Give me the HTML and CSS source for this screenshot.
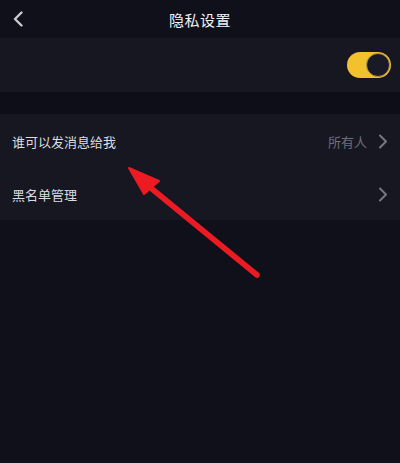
FILE: index.html
```html
<!DOCTYPE html>
<html lang="zh">
<head>
<meta charset="utf-8">
<link rel="stylesheet" href="styles.css">
</head>
<body>
<div class="page">
  <header class="nav">
    <svg class="back" width="12" height="16" viewBox="0 0 12 16"><path d="M9.5 1.5 L3 8 L9.5 14.5" fill="none" stroke="#c9c9cf" stroke-width="2.4" stroke-linecap="round" stroke-linejoin="round"/></svg>
    <h1 class="title">隐私设置</h1>
  </header>
  <section class="row toggle-row">
    <div class="switch"><div class="knob"></div></div>
  </section>
  <div class="gap"></div>
  <section class="list">
    <div class="item">
      <span class="label">谁可以发消息给我</span>
      <span class="right"><span class="value">所有人</span><svg class="chev" width="10" height="15" viewBox="0 0 10 15"><path d="M2 1.5 L8 7.5 L2 13.5" fill="none" stroke="#77777f" stroke-width="2" stroke-linecap="round" stroke-linejoin="round"/></svg></span>
    </div>
    <div class="item">
      <span class="label">黑名单管理</span>
      <span class="right"><svg class="chev" width="10" height="15" viewBox="0 0 10 15"><path d="M2 1.5 L8 7.5 L2 13.5" fill="none" stroke="#77777f" stroke-width="2" stroke-linecap="round" stroke-linejoin="round"/></svg></span>
    </div>
  </section>
  <svg class="arrow" width="400" height="463" viewBox="0 0 400 463">
    <line x1="257" y1="275" x2="146" y2="184" stroke="#ec1b22" stroke-width="5.5" stroke-linecap="round"/>
    <polygon points="129,168 159,181 144,194" fill="#ec1b22" stroke="#ec1b22" stroke-width="2" stroke-linejoin="round"/>
  </svg>
</div>
</body>
</html>
```

FILE: styles.css
```css
* { box-sizing: border-box; }
html, body { margin: 0; padding: 0; }
body {
  background: #10101a;
  font-family: "Noto Sans CJK SC", "Noto Sans", sans-serif;
  width: 400px;
  height: 463px;
  overflow: hidden;
}
.page {
  position: relative;
  width: 400px;
  height: 463px;
  background: #10101a;
}
.nav {
  height: 38px;
  display: flex;
  align-items: center;
  justify-content: center;
  position: relative;
  background: #10101b;
}
.back {
  position: absolute;
  left: 12px;
  top: 11px;
}
.title {
  margin: 0;
  font-size: 15px;
  font-weight: 400;
  color: #f2f2f4;
  letter-spacing: 0.5px;
  line-height: 1;
}
.toggle-row {
  height: 54px;
  background: #171722;
  display: flex;
  align-items: center;
  justify-content: flex-end;
  padding-right: 9px;
}
.switch {
  width: 44px;
  height: 26px;
  border-radius: 13px;
  background: #f2c12e;
  display: flex;
  align-items: center;
  justify-content: flex-end;
  padding: 1px;
}
.knob {
  width: 24px;
  height: 24px;
  border-radius: 50%;
  background: #1a1a26;
  border: 1px solid #b49a3a;
}
.gap {
  height: 22px;
  background: #0e0e18;
}
.list {
  background: #171722;
  display: flex;
  flex-direction: column;
}
.item {
  height: 52px;
  display: flex;
  align-items: center;
  justify-content: space-between;
  padding: 0 12px 0 12px;
}
.item:first-child { height: 54px; }
.label {
  font-size: 13px;
  color: #dcdce0;
}
.right {
  display: flex;
  align-items: center;
  gap: 11px;
}
.value {
  font-size: 13px;
  color: #6e6e78;
}
.chev { display: block; }
.arrow {
  position: absolute;
  left: 0;
  top: 0;
  pointer-events: none;
}
```
